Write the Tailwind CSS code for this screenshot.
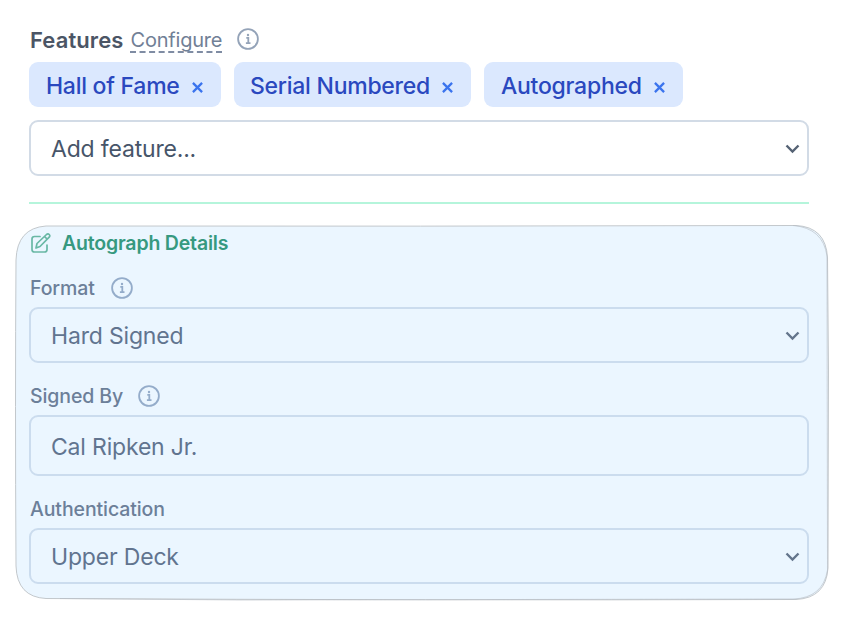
<!DOCTYPE html>
<html lang="en">
<head>
    <meta charset="UTF-8">
    <meta name="viewport" content="width=device-width, initial-scale=1.0">
    <title>Card Features</title>
    <script src="https://cdn.jsdelivr.net/npm/@tailwindcss/browser@4"></script>
</head>
<body class="bg-white font-['Inter',sans-serif] overflow-hidden">

    <div class="relative w-[846px] h-[621px] px-[29px] pt-[26px]">

        <!-- Features -->
        <div class="flex items-center h-7 pl-px">
            <span class="text-[22px] leading-7 font-semibold text-[#4b5565] tracking-[0.1px]">Features</span>
            <span class="ml-[7px] h-[26px] text-[20px] leading-[26px] tracking-[-0.2px] text-[#718096] border-b-2 border-dashed border-[#7f8ca3]">Configure</span>
            <svg class="ml-[15px] mb-[2px] w-[22px] h-[22px] text-[#94a3b8]" viewBox="0 0 22 22" fill="none" stroke="currentColor" stroke-width="1.8">
                <circle cx="11" cy="11" r="9.9"/>
                <path d="M9.3 9.8h2v5.4M8.9 15.2h4.6"/>
                <circle cx="11" cy="7" r="1.2" fill="currentColor" stroke="none"/>
            </svg>
        </div>

        <div class="mt-2 flex gap-[13px] text-[23px] font-medium tracking-[-0.26px] text-[#2a48bf]">
            <div class="flex items-center w-[192px] h-[45px] pl-[17px] rounded-[9px] bg-[#dbe8fe]">
                <span class="pt-[3px]">Hall of Fame</span>
                <svg class="ml-auto mr-[18px] mt-[5px] w-[11px] h-[11px] text-[#3b74ee]" viewBox="0 0 12 12" stroke="currentColor" stroke-width="2.5"><path d="M1 1l10 10M11 1L1 11"/></svg>
            </div>
            <div class="flex items-center w-[237px] h-[45px] pl-[16px] rounded-[9px] bg-[#dbe8fe]">
                <span class="pt-[3px]">Serial Numbered</span>
                <svg class="ml-auto mr-[18px] mt-[5px] w-[11px] h-[11px] text-[#3b74ee]" viewBox="0 0 12 12" stroke="currentColor" stroke-width="2.5"><path d="M1 1l10 10M11 1L1 11"/></svg>
            </div>
            <div class="flex items-center w-[199px] h-[45px] pl-[17px] rounded-[9px] bg-[#dbe8fe]">
                <span class="pt-[3px]">Autographed</span>
                <svg class="ml-auto mr-[18px] mt-[5px] w-[11px] h-[11px] text-[#3b74ee]" viewBox="0 0 12 12" stroke="currentColor" stroke-width="2.5"><path d="M1 1l10 10M11 1L1 11"/></svg>
            </div>
        </div>

        <div class="mt-[13px] flex items-center justify-between w-[780px] h-[56px] pl-[20px] pr-[7px] rounded-[9px] border-2 border-[#d2dbe6] text-[23px] tracking-[-0.18px] text-[#475569]">
            <span class="pt-[2px]">Add feature...</span>
            <svg class="mt-[2px] w-[15px] h-[10px]" viewBox="0 0 15 10" fill="none" stroke="#556274" stroke-width="2.4"><path d="M1.5 1.5l6 6 6-6"/></svg>
        </div>

        <div class="mt-[26px] w-[780px] h-[2px] bg-[#b5f5db]"></div>

        <!-- Highlight behind the autograph section, slightly uneven outline -->
        <svg class="absolute left-0 top-0 w-[846px] h-[621px] -z-10" viewBox="0 0 846 621" fill="none">
            <path d="M46 226C300 226 560 226.500 796 225.500Q827 227 827.500 258Q828 400 827.500 568Q826 598 796 599Q430 600 46 598.500Q17 597 16 566Q15 400 16 260Q17 228 46 226Z" fill="#ebf6ff"/>
            <path d="M46 226Q420 226.500 796 225.500Q826 227 827.500 258L828.500 370L828 568Q826 598 796 599.500Q430 600.500 46 598.500Q17 597 16 566Q15 400 16 260Q17 228 46 226" stroke="#c3c8cc"/>
            <path d="M793 225.500Q823 228 827 256L827.500 570Q823 598 793 599L240 600L60 598.500" stroke="#b4bbc2" stroke-width=".6"/>
        </svg>

        <!-- Autograph details -->
        <div class="mt-[25px] flex items-center h-7 pl-[2px] text-[#369980]">
            <svg class="mb-px w-[20px] h-[20px] text-[#69b8a5]" viewBox="0 0 20 20" fill="none" stroke="currentColor" stroke-width="1.7" stroke-linejoin="round" stroke-linecap="round">
                <path d="M9 3.500H3.500Q1 3.500 1 6v10.500Q1 19 3.500 19h10Q16 19 16 16.500V12"/>
                <path d="M5 15l1-4.500L15.500 1.500q1.500-1.200 2.700 0t0 2.700L9 13.500zM13.500 3.500l2.700 2.700"/>
            </svg>
            <span class="ml-[11px] pt-[2px] text-[19.5px] font-semibold tracking-[-0.18px]">Autograph Details</span>
        </div>

        <div class="mt-[17px] flex items-center h-7 pl-px text-[19.5px] font-medium tracking-[-0.1px] text-[#6c7f99]">
            <span class="pt-[2px]">Format</span>
            <svg class="ml-[16px] w-[22px] h-[22px] text-[#94acca]" viewBox="0 0 22 22" fill="none" stroke="currentColor" stroke-width="1.8">
                <circle cx="11" cy="11" r="9.9"/>
                <path d="M9.3 9.800h2v5.400M8.900 15.200h4.600"/>
                <circle cx="11" cy="7" r="1.2" fill="currentColor" stroke="none"/>
            </svg>
        </div>
        <div class="mt-[5px] flex items-center justify-between w-[780px] h-[56px] pl-[20px] pr-[7px] rounded-[9px] border-2 border-[#cbdcee] text-[23px] tracking-[-0.18px] text-[#61748f]">
            <span class="pt-[2px]">Hard Signed</span>
            <svg class="mt-[2px] w-[15px] h-[10px]" viewBox="0 0 15 10" fill="none" stroke="#64758c" stroke-width="2.4"><path d="M1.5 1.5l6 6 6-6"/></svg>
        </div>

        <div class="mt-[19px] flex items-center h-7 pl-px text-[19.5px] font-medium tracking-[-0.1px] text-[#6c7f99]">
            <span class="pt-[2px]">Signed By</span>
            <svg class="ml-[15px] w-[22px] h-[22px] text-[#94acca]" viewBox="0 0 22 22" fill="none" stroke="currentColor" stroke-width="1.8">
                <circle cx="11" cy="11" r="9.9"/>
                <path d="M9.3 9.800h2v5.400M8.900 15.200h4.600"/>
                <circle cx="11" cy="7" r="1.2" fill="currentColor" stroke="none"/>
            </svg>
        </div>
        <div class="mt-[5px] flex items-center w-[780px] h-[61px] pl-[20px] rounded-[9px] border-2 border-[#cbdcee] text-[23px] tracking-[-0.18px] text-[#61748f]">
            <span class="pt-[3px]">Cal Ripken Jr.</span>
        </div>

        <div class="mt-[19px] flex items-center h-7 pl-px text-[19.5px] font-medium tracking-[-0.1px] text-[#6c7f99]">
            <span class="pt-[2px]">Authentication</span>
        </div>
        <div class="mt-[5px] flex items-center justify-between w-[780px] h-[56px] pl-[20px] pr-[7px] rounded-[9px] border-2 border-[#cbdcee] text-[23px] tracking-[-0.18px] text-[#61748f]">
            <span class="pt-[2px]">Upper Deck</span>
            <svg class="mt-[2px] w-[15px] h-[10px]" viewBox="0 0 15 10" fill="none" stroke="#64758c" stroke-width="2.4"><path d="M1.5 1.5l6 6 6-6"/></svg>
        </div>
    </div>

</body>
</html>
